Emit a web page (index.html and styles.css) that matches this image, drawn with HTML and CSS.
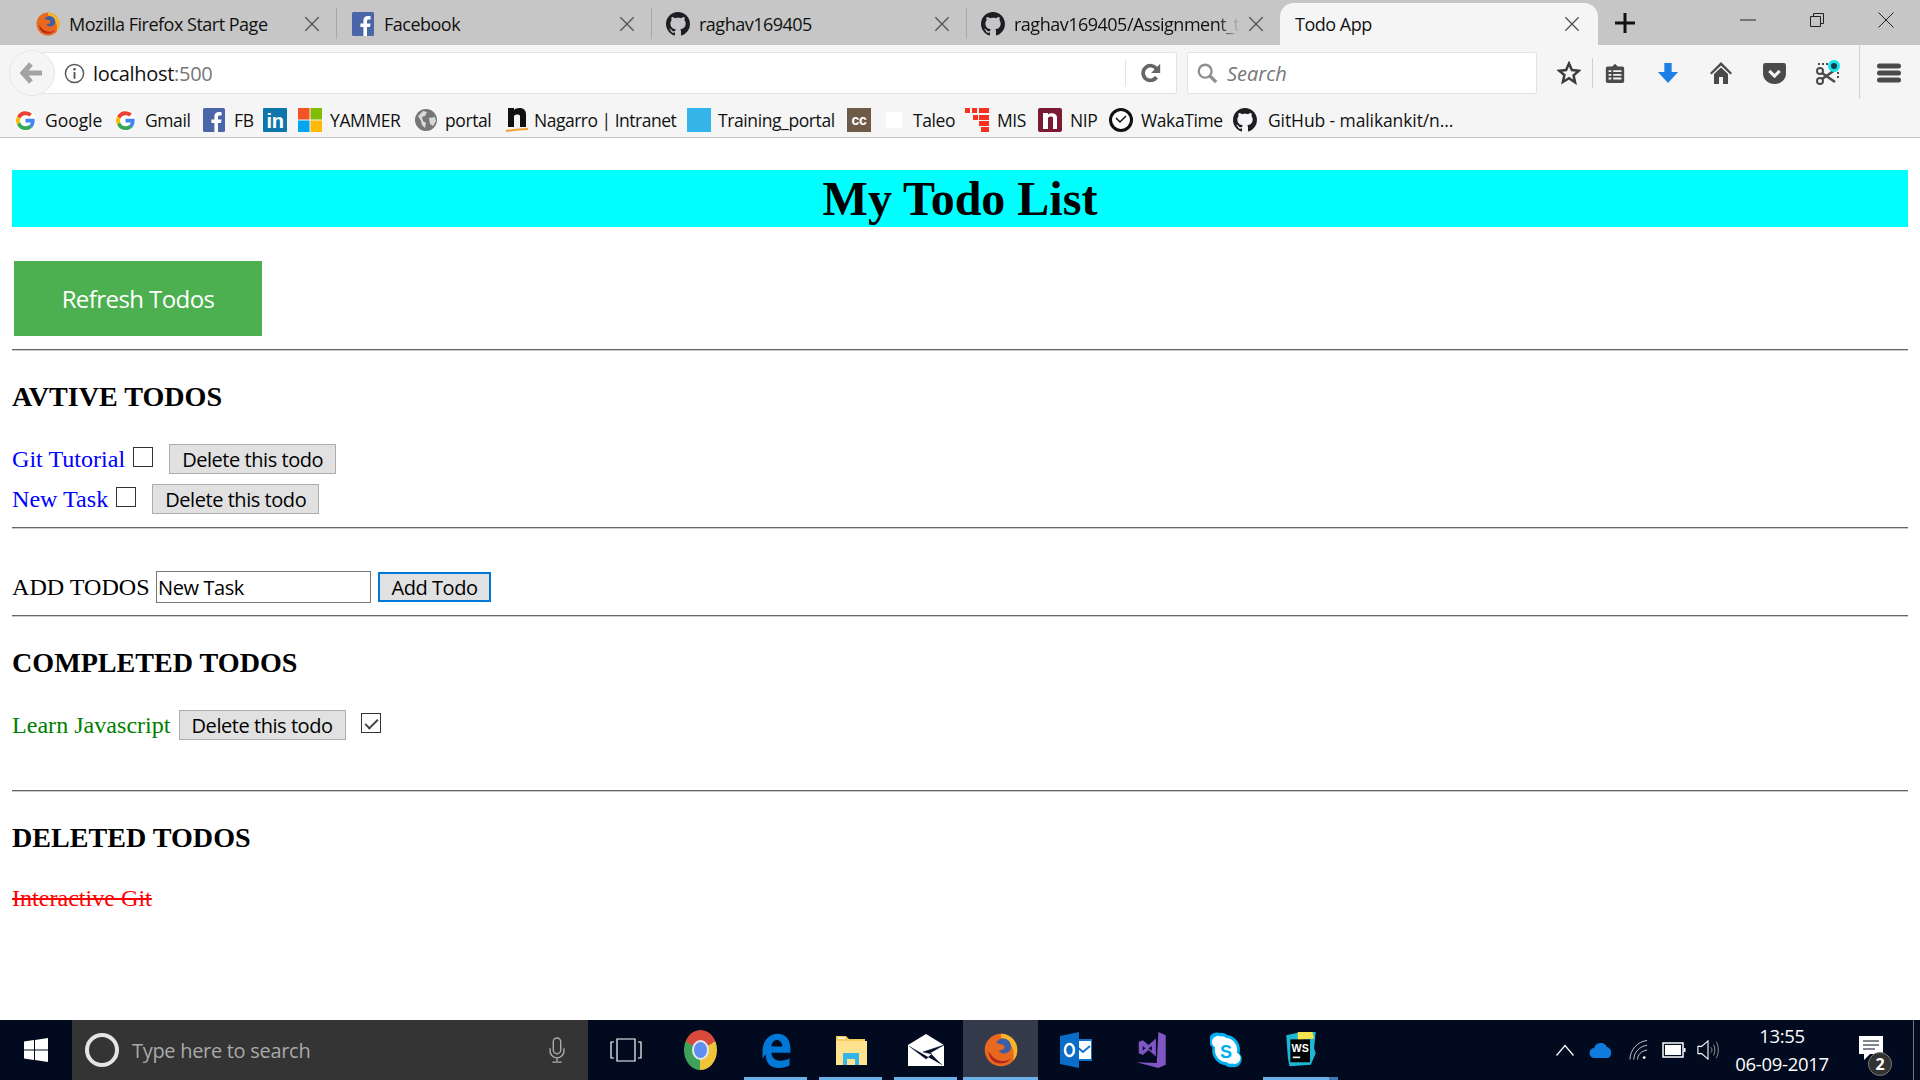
FILE: index.html
```html
<!DOCTYPE html>
<html lang="en">
<head>
<meta charset="utf-8">
<title>Todo App</title>
<link rel="stylesheet" href="styles.css">
</head>
<body>
<svg class="sprite" width="0" height="0" aria-hidden="true">
  <symbol id="gh" viewBox="0 0 16 16"><path fill="#1b1f23" fill-rule="evenodd" d="M8 0C3.58 0 0 3.58 0 8c0 3.54 2.29 6.53 5.47 7.59.4.07.55-.17.55-.38 0-.19-.01-.82-.01-1.49-2.01.37-2.53-.49-2.69-.94-.09-.23-.48-.94-.82-1.13-.28-.15-.68-.52-.01-.53.63-.01 1.08.58 1.23.82.72 1.21 1.87.87 2.33.66.07-.52.28-.87.51-1.07-1.78-.2-3.64-.89-3.64-3.95 0-.87.31-1.59.82-2.15-.08-.2-.36-1.02.08-2.12 0 0 .67-.21 2.2.82.64-.18 1.32-.27 2-.27.68 0 1.36.09 2 .27 1.53-1.04 2.2-.82 2.2-.82.44 1.1.16 1.92.08 2.12.51.56.82 1.27.82 2.15 0 3.07-1.87 3.75-3.65 3.95.29.25.54.73.54 1.48 0 1.07-.01 1.93-.01 2.2 0 .21.15.46.55.38A8.013 8.013 0 0016 8c0-4.42-3.58-8-8-8z"/></symbol>
  <symbol id="fb" viewBox="0 0 22 24"><rect width="22" height="24" rx="1.5" fill="#4a66a8"/><path fill="#fff" d="M15 24v-9h3l.5-3.6H15V9.2c0-1 .4-1.7 1.8-1.7h1.8V4.2c-.4 0-1.4-.2-2.7-.2-2.7 0-4.5 1.6-4.5 4.6v2.8H8.4V15h3v9z"/></symbol>
  <symbol id="goog" viewBox="3.2 3.2 17.6 17.6"><circle cx="12" cy="12" r="8.800" fill="#fff"/><path fill="#ea4335" d="M12 7.500c1.200 0 2.300.4 3.100 1.200l2.300-2.300A8 8 0 0 0 4.900 8.400l2.700 2.100A4.800 4.800 0 0 1 12 7.500z"/><path fill="#4285f4" d="M19.700 12.200c0-.6 0-1.100-.2-1.700H12v3.200h4.400c-.2 1-.8 1.900-1.600 2.500l2.600 2c1.400-1.400 2.300-3.500 2.300-6z"/><path fill="#fbbc05" d="M7.500 13.400a4.800 4.800 0 0 1 .1-2.900L4.900 8.400a8 8 0 0 0 0 7.200z"/><path fill="#34a853" d="M12 20c2.200 0 4-.7 5.400-2l-2.600-2c-.7.5-1.600.8-2.800.8-2.100 0-3.800-1.400-4.500-3.400l-2.600 2.200A8 8 0 0 0 12 20z"/></symbol>
  <symbol id="ffx" viewBox="0 0 24 24"><circle cx="12" cy="12" r="11.500" fill="#e8681f"/><path fill="#f7b52e" d="M12 .5a11.500 11.500 0 0 1 11.500 11.500c0 3-1 5.600-3 7.600 1-4 .6-8-1.500-11.200-1.700-2.700-4.200-4.400-7-5.200z"/><circle cx="13.500" cy="9.500" r="5.600" fill="#3a5fa8"/><path fill="#e8681f" d="M5 6c2-.8 4 1 5.500 1.500 2 .6 4 .5 4 2.500 0 1.500-2 2-4 2.500 1 2 4 2.500 6 1.500 2-1 3-3 3-3 0 5-4 8-8.500 8C6 21 3 17 3 12.500 3 10 3.500 8 5 6z"/><path fill="#b3261e" d="M3 13c.5 5 4 8.500 9 8.500 3 0 5.500-1.300 7-3.500-4 3-10 2-13-1.500C4.500 15 4 14 3 13z"/></symbol>
  <symbol id="tabx" viewBox="0 0 18 18"><path d="M1.500 1.500l15 15M16.500 1.500l-15 15" fill="none" stroke="#555" stroke-width="1.500"/></symbol>
</svg>

<header class="chrome">
  <div class="tabstrip">
    <div class="tab tab-first"><svg class="favicon"><use href="#ffx"/></svg><span class="tab-title">Mozilla Firefox Start Page</span><svg class="tab-x"><use href="#tabx"/></svg></div>
    <div class="tab"><svg class="favicon"><use href="#fb"/></svg><span class="tab-title">Facebook</span><svg class="tab-x"><use href="#tabx"/></svg></div>
    <div class="tab"><svg class="favicon"><use href="#gh"/></svg><span class="tab-title">raghav169405</span><svg class="tab-x"><use href="#tabx"/></svg></div>
    <div class="tab tab-fourth"><svg class="favicon"><use href="#gh"/></svg><span class="tab-title tab-fade">raghav169405/Assignment_t</span><svg class="tab-x"><use href="#tabx"/></svg></div>
    <div class="tab tab-active"><span class="tab-title">Todo App</span><svg class="tab-x"><use href="#tabx"/></svg></div>
    <svg class="newtab" viewBox="0 0 22 22"><path d="M11 1v20M1 11h20" stroke="#111" stroke-width="3"/></svg>
    <div class="winctl">
      <svg viewBox="0 0 16 16"><path d="M0 8h16" stroke="#222" stroke-width="1"/></svg>
      <svg viewBox="0 0 16 16"><path d="M1.500 4.500h10v10h-10zM4.500 4.500v-3h10v10h-3" fill="none" stroke="#222"/></svg>
      <svg viewBox="0 0 16 16"><path d="M.5.5l15 15M15.500.5l-15 15" stroke="#222" fill="none"/></svg>
    </div>
  </div>

  <div class="navbar">
    <div class="urlbar">
      <span class="back"><svg viewBox="0 0 24 24" width="24" height="24"><path d="M11 3L3 12l8 9M4 12h18" fill="none" stroke="#a3a3a3" stroke-width="5"/></svg></span>
      <svg class="info" viewBox="0 0 22 22"><circle cx="11" cy="11" r="9.500" fill="none" stroke="#555" stroke-width="1.500"/><path d="M11 9.500v7" stroke="#555" stroke-width="2"/><circle cx="11" cy="6.500" r="1.300" fill="#555"/></svg>
      <span class="url">localhost<span class="port">:500</span></span>
      <svg class="reload" viewBox="0 0 24 24"><path d="M18 16.500a8 8 0 1 1 0-9" fill="none" stroke="#666" stroke-width="4"/><path d="M22 2v10H12z" fill="#666"/></svg>
    </div>
    <div class="searchbar">
      <svg viewBox="0 0 24 24"><circle cx="10" cy="10" r="7" fill="none" stroke="#8f8f8f" stroke-width="2.500"/><path d="M15 15l7 7" stroke="#8f8f8f" stroke-width="3.500"/></svg>
      <span>Search</span>
    </div>
    <div class="toolicons">
      <svg class="ti-star" viewBox="0 0 24 24"><path d="M12 2.500l2.900 6.500 7 .7-5.300 4.700 1.500 7L12 17.300 5.900 21l1.500-7L2.100 9.700l7-.7z" fill="none" stroke="#3c3c3c" stroke-width="2.500"/></svg>
      <span class="ti-sep"></span>
      <svg class="ti-list" viewBox="0 0 24 24"><path fill="#4a4a4a" fill-rule="evenodd" d="M4 5h5l3-3 3 3h5a2 2 0 0 1 2 2v14a2 2 0 0 1-2 2H4a2 2 0 0 1-2-2V7a2 2 0 0 1 2-2zm1 4v2h3V9zm5 0v2h9V9zM5 13v2h3v-2zm5 0v2h9v-2zM5 17v2h3v-2zm5 0v2h9v-2z"/></svg>
      <svg class="ti-down" viewBox="0 0 24 24"><path fill="#1e7fe6" d="M8 1h8v10h7L12 23 1 11h7z"/></svg>
      <svg class="ti-home" viewBox="0 0 24 24"><path fill="#4a4a4a" d="M12 1l11 11-1.500 1.500L12 4.500 2.500 13.500 1 12zM5 13l7-6.500 7 6.500v10h-5v-7h-4v7H5z"/></svg>
      <svg class="ti-pocket" viewBox="0 0 24 24"><path fill="#4a4a4a" d="M3 2h18a2 2 0 0 1 2 2v8c0 6-5 10-11 10S1 18 1 12V4a2 2 0 0 1 2-2z"/><path d="M7 9.500l5 5 5-5" fill="none" stroke="#f5f5f5" stroke-width="3"/></svg>
      <svg class="ti-scissors" viewBox="0 0 26 26"><circle cx="5" cy="21" r="3" fill="none" stroke="#4a4a4a" stroke-width="2"/><circle cx="5" cy="11" r="3" fill="none" stroke="#4a4a4a" stroke-width="2"/><path d="M7 13l13 9M7 19l13-9" stroke="#4a4a4a" stroke-width="2.500"/><path d="M3 4h11M23 12v8" stroke="#4a4a4a" stroke-width="2" stroke-dasharray="2 2"/><circle cx="19" cy="6" r="6" fill="#15e3ee"/><circle cx="19" cy="6" r="3" fill="#1a3a4a"/></svg>
      <span class="ti-sep ti-sep-tall"></span>
      <svg class="ti-menu" viewBox="0 0 24 20"><path d="M2.500 3h19M2.500 10h19M2.500 17h19" stroke="#4a4a4a" stroke-width="5" stroke-linecap="round"/></svg>
    </div>
  </div>

  <nav class="bookmarks">
    <div class="bm bm-google"><svg><use href="#goog"/></svg><span>Google</span></div>
    <div class="bm bm-gmail"><svg><use href="#goog"/></svg><span>Gmail</span></div>
    <div class="bm bm-fb"><svg><use href="#fb"/></svg><span>FB</span></div>
    <div class="bm bm-in"><svg viewBox="0 0 24 24"><rect width="24" height="24" rx="1" fill="#0f76ab"/><text x="12" y="20" text-anchor="middle" class="icon-text in-text">in</text></svg></div>
    <div class="bm bm-yam"><svg viewBox="0 0 24 24"><rect width="11.500" height="11.500" fill="#f35325"/><rect x="12.500" width="11.500" height="11.500" fill="#81bc06"/><rect y="12.500" width="11.500" height="11.500" fill="#05a6f0"/><rect x="12.500" y="12.500" width="11.500" height="11.500" fill="#ffba08"/></svg><span>YAMMER</span></div>
    <div class="bm bm-portal"><svg viewBox="0 0 24 24"><circle cx="12" cy="12" r="11" fill="#767676"/><path fill="#d8d8d8" d="M4 8l5-5 4 1-2 4-3 1 1 4 3 2-1 5-3-3-1-4zM15 10l6-1 1 4-3 5-3-2z"/></svg><span>portal</span></div>
    <div class="bm bm-nag"><svg viewBox="0 0 24 24"><path fill="#111" d="M3 0h6v2c3-3 12-3 12 4v13h-6V8c0-2-5-2-6 0v11H3z"/><path d="M1 23c6-1 14-2 22-2" stroke="#f0a030" stroke-width="2" fill="none"/></svg><span>Nagarro | Intranet</span></div>
    <div class="bm bm-train"><svg viewBox="0 0 24 24"><rect width="24" height="24" fill="#33b5e9"/></svg><span>Training_portal</span></div>
    <div class="bm bm-cc"><svg viewBox="0 0 24 24"><rect width="24" height="24" fill="#6f5a48"/><text x="12" y="16.500" text-anchor="middle" class="icon-text cc-text">cc</text></svg></div>
    <div class="bm bm-taleo"><svg viewBox="0 0 16 24"><rect y="4" width="16" height="16" fill="#fff"/></svg><span>Taleo</span></div>
    <div class="bm bm-mis"><svg viewBox="0 0 24 24"><path fill="#f7311f" d="M0 0h5v5H0zM7 0h5v5H7zM14 0h5v5h-5zM19 0h5v5h-5zM8 7h5v5H8zM14 7h10v5H14zM14 13h10v5H14zM16 19h8v5h-8z"/></svg><span>MIS</span></div>
    <div class="bm bm-nip"><svg viewBox="0 0 24 24"><rect width="24" height="24" rx="2" fill="#7d1a33"/><path fill="#fff" d="M5 5h5v1.500c2-2 9-2 9 3V21h-4V10c0-2-4-2-5 0v11H5z"/></svg><span>NIP</span></div>
    <div class="bm bm-waka"><svg viewBox="0 0 24 24"><circle cx="12" cy="12" r="10.500" fill="#fff" stroke="#111" stroke-width="3"/><path d="M7 10l4 4 6-6" fill="none" stroke="#111" stroke-width="1.500"/></svg><span>WakaTime</span></div>
    <div class="bm bm-gh"><svg><use href="#gh"/></svg><span>GitHub - malikankit/n...</span></div>
  </nav>
</header>

<main class="page">
  <h1 class="title">My Todo List</h1>
  <button class="refresh">Refresh Todos</button>
  <hr class="rule">

  <h3 class="section-head head-active">AVTIVE TODOS</h3>
  <div class="todo todo-first"><span class="active">Git Tutorial</span><input class="check" type="checkbox"><button class="del">Delete this todo</button></div>
  <div class="todo todo-second"><span class="active">New Task</span><input class="check" type="checkbox"><button class="del">Delete this todo</button></div>
  <hr class="rule rule-after-active">

  <div class="add-row"><span class="add-label">ADD TODOS</span><input class="add-input" type="text" value="New Task"><button class="add-btn">Add Todo</button></div>
  <hr class="rule rule-after-add">

  <h3 class="section-head head-done">COMPLETED TODOS</h3>
  <div class="todo todo-done"><span class="done">Learn Javascript</span><button class="del">Delete this todo</button><input class="check check-done" type="checkbox" checked></div>
  <hr class="rule rule-after-done">

  <h3 class="section-head head-deleted">DELETED TODOS</h3>
  <div class="deleted">Interactive Git</div>
</main>

<footer class="taskbar">
  <div class="start"><svg viewBox="0 0 24 24"><path fill="#fff" d="M0 3.500l10-1.400V11.500H0zM11 2l13-2v11.500H11zM0 12.500h10v9.400L0 20.500zM11 12.500h13V24l-13-2z"/></svg></div>
  <div class="tsearch">
    <span class="cortana"></span>
    <span class="tsearch-text">Type here to search</span>
    <svg class="mic" viewBox="0 0 18 28"><rect x="5" y="1" width="8" height="17" rx="4" fill="none" stroke="#aaa" stroke-width="1.500"/><path d="M1.500 12v3a7.500 7.500 0 0 0 15 0v-3M9 22.500V26M4 27h10" fill="none" stroke="#aaa" stroke-width="1.500"/></svg>
  </div>
  <div class="slot"><svg class="ticon-view" viewBox="0 0 32 24"><path d="M7 1h18v22H7zM4 4H1v16h3M28 4h3v16h-3" fill="none" stroke="#fff" stroke-width="1.200"/></svg></div>
  <div class="slot"><span class="ticon-chrome"><span></span></span></div>
  <div class="slot slot-on"><svg class="ticon" viewBox="0 0 32 40"><path fill="#0078d7" d="M1 20C2 8 10 2 18 2c9 0 14 7 14 17v4H11c0 6 5 9 10 9 4 0 8-1 10-3v8c-3 2-7 3-12 3-10 0-15-7-14-15-2 1-3 3-4 5zm10-4h12c0-4-3-7-6-7-3 0-6 3-6 7z"/></svg></div>
  <div class="slot slot-on"><svg class="ticon" viewBox="0 0 32 34"><path fill="#f6cd5a" d="M1 3h10l3 3h16v4H1z"/><rect x="1" y="8" width="31" height="24" fill="#fee28d"/><path fill="#36b3e8" d="M8 32V20h16v12h-4v-6h-8v6z"/><rect x="3" y="4.500" width="7" height="1.500" fill="#fff"/></svg></div>
  <div class="slot slot-on"><svg class="ticon ticon-wide" viewBox="0 0 36 36"><path fill="#fff" d="M18 2l18 11v21H0V13z"/><path d="M1 14l17 13 6-5-9-2 21-7-14 8 12 12" fill="#000f26" stroke="#000f26" stroke-width=".5"/></svg></div>
  <div class="slot slot-on slot-current"><svg class="ticon-big"><use href="#ffx"/></svg></div>
  <div class="slot"><svg class="ticon" viewBox="0 0 32 36"><rect x="14" y="8" width="18" height="20" fill="#fff" stroke="#0f72c6" stroke-width="2"/><path d="M16 14l7 6 7-6" fill="none" stroke="#0f72c6" stroke-width="2"/><path fill="#0a6ec8" d="M0 4l19-4v36L0 32z"/><ellipse cx="9.500" cy="18" rx="4.500" ry="6" fill="none" stroke="#fff" stroke-width="2.500"/></svg></div>
  <div class="slot"><svg class="ticon" viewBox="0 0 36 44"><path fill="#7f56c2" d="M27 0l9 4v36l-9 4-27-7 25 1z"/><path fill="#7f56c2" d="M3 12l5-2 7 6 9-8v22l-9-8-7 6-5-2zm5 5v6l3-3zm11 0l-4 3 4 3z" fill-rule="evenodd"/></svg></div>
  <div class="slot"><svg class="ticon" viewBox="0 0 34 40"><path fill="#00aff0" d="M10 1a9 9 0 0 1 8 2 17 17 0 0 1 14 21 9 9 0 0 1-8 15 9 9 0 0 1-8-2A17 17 0 0 1 2 17 9 9 0 0 1 10 1z"/><path fill="#fff" d="M11 5a6 6 0 0 1 6 1.500A13.500 13.500 0 0 1 29 23a6 6 0 0 1-5 12 6 6 0 0 1-6-1.500A13.500 13.500 0 0 1 5 17 6 6 0 0 1 11 5z"/><text x="17" y="29" text-anchor="middle" class="icon-text skype-text">S</text></svg></div>
  <div class="slot slot-on slot-ws"><svg class="ticon" viewBox="0 0 36 44"><path fill="#1fb6d4" d="M0 4l18-4 18 0-2 20 2 6-6 14-26 2-2-10z"/><path fill="#f4e44e" d="M14 0h18l2 8-20 2z"/><rect x="5" y="9" width="24" height="28" fill="#000"/><text x="17" y="24" text-anchor="middle" class="icon-text ws-text">WS</text><rect x="8" y="30" width="9" height="2" fill="#fff"/></svg></div>

  <div class="tray">
    <svg class="tr-caret" viewBox="0 0 18 12"><path d="M.5 11.500L9 1.500l8.500 10" fill="none" stroke="#fff" stroke-width="1.200"/></svg>
    <svg class="tr-cloud" viewBox="0 0 24 16"><path fill="#0f7bdc" d="M6 16a5 5 0 0 1-1-10 7 7 0 0 1 13-1 6 6 0 0 1 1 11z"/></svg>
    <svg class="tr-wifi" viewBox="0 0 20 22"><path d="M1 21C1 11 9 2 19 1M5 21c0-7 6-14 14-15M9 21c0-5 4-9 10-10" fill="none" stroke="#ccc" stroke-width="1"/><circle cx="16" cy="19" r="1.500" fill="#fff"/></svg>
    <svg class="tr-batt" viewBox="0 0 24 16"><path d="M1 1h20v14H1z" fill="none" stroke="#fff" stroke-width="1.500"/><rect x="3" y="3" width="16" height="10" fill="#fff"/><rect x="22" y="6" width="1.500" height="4" fill="#fff"/></svg>
    <svg class="tr-vol" viewBox="0 0 24 24"><path d="M1 8h4l7-6v20l-7-6H1z" fill="none" stroke="#fff" stroke-width="1.200"/><path d="M15 9a4 4 0 0 1 0 6M18 6c2 3 2 9 0 12M21 3c3 5 3 13 0 18" fill="none" stroke="#999" stroke-width="1"/></svg>
    <div class="clock"><span>13:55</span><span>06-09-2017</span></div>
    <div class="notif">
      <svg viewBox="0 0 24 28"><path fill="#fff" d="M0 0h24v18H11l-6 6v-6H0z"/><path d="M4 5h16M4 9h16M4 13h12" stroke="#000f26" stroke-width="1"/></svg>
      <span class="badge">2</span>
    </div>
  </div>
  <span class="edge"></span>
</footer>
</body>
</html>
```

FILE: styles.css
```css
* { box-sizing: border-box; }
html, body { margin: 0; height: 100%; }
body {
  width: 1920px;
  height: 1080px;
  overflow: hidden;
  display: flex;
  flex-direction: column;
  background: #fff;
  font-family: "Liberation Serif", serif;
}
.sprite { position: absolute; }

/* browser chrome */
.chrome { height: 138px; flex: none; background: #f5f5f5; border-bottom: 1px solid #c4c4c4; font-family: "Open Sans", sans-serif; color: #111; }
.tabstrip { height: 45px; background: #c6c6c6; display: flex; align-items: stretch; }
.tab { width: 315px; flex: none; position: relative; display: flex; align-items: center; padding: 2px 0 0 15px; font-size: 18px; }
.tab::before { content: ""; position: absolute; left: 0; top: 8px; bottom: 6px; width: 1px; background: #a8a8a8; }
.tab-first { width: 336px; padding-left: 36px; }
.tab-first::before { display: none; }
.tab-fourth { width: 314px; }
.favicon { width: 24px; height: 24px; flex: none; margin-right: 9px; }
.tab-title { flex: 1; min-width: 0; white-space: nowrap; overflow: hidden; letter-spacing: -.5px; }
.tab-fade { -webkit-mask-image: linear-gradient(to right, #000 90%, transparent 100%); mask-image: linear-gradient(to right, #000 90%, transparent 100%); margin-right: 8px; }
.tab-x { flex: none; width: 16px; height: 16px; margin-right: 16px; }
.tab-active { width: 318px; margin-top: 3px; background: #f5f5f5; border-radius: 14px 14px 0 0; padding: 0 0 0 15px; }
.tab-active::before { display: none; }
.tab-active .tab-x { margin-right: 18px; }
.newtab { width: 22px; height: 22px; align-self: center; margin-left: 16px; }
.winctl { margin-left: auto; display: flex; gap: 53px; padding: 0 26px 0 0; align-items: center; margin-top: -5px; }
.winctl svg { width: 16px; height: 16px; }

.navbar { height: 51px; display: flex; align-items: center; padding: 5px 0 0 40px; }
.urlbar { width: 1137px; height: 42px; background: #fff; border: 1px solid #e4e4e4; border-radius: 2px; display: flex; align-items: center; position: relative; padding-left: 24px; }
.back { position: absolute; left: -32px; top: -3px; width: 46px; height: 46px; border-radius: 50%; background: #f5f5f5; border: 1px solid #e6e6e6; display: flex; align-items: center; justify-content: center; }
.info { width: 21px; height: 21px; margin-left: -1px; margin-right: 8px; }
.url { font-size: 20px; color: #111; letter-spacing: -.3px; }
.port { color: #777; }
.reload { width: 22px; height: 22px; position: absolute; right: 14px; top: 9px; }
.urlbar::after { content: ""; position: absolute; right: 50px; top: 7px; bottom: 7px; width: 1px; background: #e2e2e2; }
.searchbar { width: 350px; height: 42px; margin-left: 10px; background: #fff; border: 1px solid #e4e4e4; border-radius: 2px; display: flex; align-items: center; padding-left: 8px; font-size: 20px; font-style: italic; color: #777; gap: 9px; }
.searchbar svg { width: 22px; height: 22px; }
.toolicons { display: flex; align-items: center; height: 46px; margin-left: 20px; position: relative; }
.toolicons svg { flex: none; }
.ti-star { width: 24px; height: 24px; }
.ti-sep { width: 1px; height: 30px; background: #d0d0d0; margin-left: 11px; }
.ti-list { width: 22px; height: 24px; margin-left: 11px; }
.ti-down { width: 22px; height: 24px; margin-left: 31px; }
.ti-home { width: 24px; height: 24px; margin-left: 30px; }
.ti-pocket { width: 25px; height: 25px; margin-left: 29px; }
.ti-scissors { width: 26px; height: 26px; margin-left: 28px; }
.ti-sep-tall { height: 55px; margin-left: 18px; margin-top: -4px; }
.ti-menu { width: 24px; height: 20px; margin-left: 17px; }

.bookmarks { height: 41px; display: flex; align-items: center; padding: 7px 0 0 15px; font-size: 17.500px; white-space: nowrap; }
.bm { display: flex; align-items: center; flex: none; letter-spacing: -.4px; }
.bm svg { width: 24px; height: 24px; flex: none; }
.bm span { margin-left: 8px; }
.bm-google svg, .bm-gmail svg { width: 21px; height: 21px; }
.bm-google span, .bm-gmail span { margin-left: 9px; }
.bm-google { width: 100px; letter-spacing: -.05px; }
.bm-gmail { width: 87px; }
.bm-fb { width: 61px; }
.bm-in { width: 35px; }
.bm-yam { width: 116px; }
.bm-portal { width: 91px; }
.bm-portal span { margin-left: 7px; }
.bm-nag { width: 182px; letter-spacing: -.5px; }
.bm-nag span { margin-left: 5px; }
.bm-train { width: 160px; }
.bm-train span { margin-left: 7px; }
.bm-cc { width: 39px; }
.bm-taleo { width: 79px; }
.bm-taleo svg { width: 16px; }
.bm-taleo span { margin-left: 11px; }
.bm-mis { width: 73px; }
.bm-nip { width: 71px; }
.bm-waka { width: 124px; }
.bm-gh { letter-spacing: -.1px; }
.bm-gh span { margin-left: 11px; }
.icon-text { font-family: "Liberation Sans", sans-serif; font-weight: 700; fill: #fff; }
.in-text { font-size: 20px; }
.cc-text { font-size: 14px; }
.skype-text { font-size: 20px; fill: #00aff0; }
.ws-text { font-size: 13px; }

/* page */
.page { flex: 1; min-height: 0; padding: 0 12px; overflow: hidden; }
.title { margin: 32px 0 34px; height: 57px; line-height: 57px; background: #0ff; color: #000; text-align: center; font-size: 48px; font-weight: 700; }
.refresh { display: block; width: 248px; height: 75px; margin: 0 0 13px 2px; background: #4caf50; color: #fff; border: 0; font-family: "Open Sans", sans-serif; font-size: 24px; letter-spacing: -.58px; padding: 0; }
.rule { margin: 0; height: 2px; border: 0; border-top: 1px solid #666; border-bottom: 1px solid #ccc; }
.section-head { margin: 0; font-size: 28.100px; font-weight: 700; line-height: 32px; color: #000; }
.head-active { margin-top: 30px; }
.head-done { margin-top: 30px; }
.head-deleted { margin-top: 30px; }
.todo { display: flex; align-items: center; height: 30px; font-size: 24.100px; white-space: nowrap; }
.todo-first { margin-top: 31px; }
.todo-second { margin-top: 10px; }
.rule-after-active { margin-top: 13px; }
.active { color: #00f; }
.done { color: #008000; }
.check { appearance: none; -webkit-appearance: none; width: 20px; height: 20px; margin: 0 16px 5px 8px; border: 1px solid #333; background: #fff; position: relative; flex: none; }
.check-done { margin: 0 0 5px 15px; }
.check-done::before { content: ""; position: absolute; left: 6px; top: 2px; width: 5px; height: 11px; border: solid #444; border-width: 0 2px 2px 0; transform: rotate(45deg); }
.del { width: 167px; height: 30px; padding: 0; background: #e1e1e1; border: 1px solid #adadad; color: #000; font-family: "Open Sans", sans-serif; font-size: 20px; letter-spacing: -.45px; flex: none; }
.todo-done .del { margin-left: 8px; }
.add-row { display: flex; align-items: center; height: 32px; margin-top: 42px; font-size: 24.100px; white-space: nowrap; }
.add-label { width: 144px; color: #000; }
.add-input { width: 215px; height: 32px; border: 1px solid #767676; padding: 0 1px; font-family: "Open Sans", sans-serif; font-size: 20px; letter-spacing: -.4px; color: #000; }
.add-btn { width: 113px; height: 30px; margin-left: 7px; background: #e1e1e1; border: 2px solid #0078d7; padding: 0; color: #000; font-family: "Open Sans", sans-serif; font-size: 20px; letter-spacing: -.45px; }
.rule-after-add { margin-top: 12px; }
.todo-done { margin-top: 31px; }
.rule-after-done { margin-top: 50px; }
.deleted { margin-top: 31px; font-size: 24.100px; color: #f00; text-decoration: line-through; }

/* taskbar */
.taskbar { height: 60px; flex: none; background: #010a1e; display: flex; align-items: center; position: relative; font-family: "Open Sans", sans-serif; color: #fff; }
.start { width: 72px; display: flex; justify-content: center; }
.start svg { width: 24px; height: 24px; }
.tsearch { width: 516px; height: 60px; background: #343434; display: flex; align-items: center; padding-left: 13px; }
.cortana { width: 34px; height: 34px; border-radius: 50%; border: 4px solid #e4e4e4; flex: none; }
.tsearch-text { margin-left: 13px; font-size: 20px; color: #a9a9a9; flex: 1; letter-spacing: -.3px; }
.mic { width: 18px; height: 26px; margin-right: 22px; }
.slot { width: 75px; height: 60px; flex: none; display: flex; align-items: center; justify-content: center; position: relative; }
.slot-on::after { content: ""; position: absolute; left: 6px; right: 6px; bottom: 0; height: 3px; background: #6cb0e8; }
.slot-current { background: #333a4a; }
.slot-current::after { left: 0; right: 0; }
.slot-ws::after { left: 0; right: 0; background: linear-gradient(to right, #6cb0e8 88%, #3f78b0 88%); }
.ticon { width: 32px; height: 36px; }
.ticon-wide { width: 36px; height: 36px; }
.ticon-big { width: 34px; height: 34px; }
.ticon-view { width: 32px; height: 24px; }
.ticon-chrome { width: 33px; height: 40px; border-radius: 50%; display: flex; align-items: center; justify-content: center; background: conic-gradient(from 60deg, #f0c43a 0 120deg, #3da35a 120deg 240deg, #d94a3c 240deg 360deg); }
.ticon-chrome span { width: 17px; height: 20px; border-radius: 50%; background: #5c8ff0; border: 2px solid #e8e8e8; }
.tray { margin-left: auto; display: flex; align-items: center; height: 60px; margin-right: 17px; }
.tray svg { flex: none; }
.tr-caret { width: 18px; height: 12px; }
.tr-cloud { width: 24px; height: 16px; margin-left: 15px; }
.tr-wifi { width: 19px; height: 22px; margin-left: 16px; }
.tr-batt { width: 24px; height: 16px; margin-left: 14px; }
.tr-vol { width: 22px; height: 24px; margin-left: 11px; }
.clock { width: 100px; margin-left: 13px; display: flex; flex-direction: column; align-items: center; font-size: 18.500px; line-height: 28px; letter-spacing: -.3px; }
.notif { width: 60px; height: 60px; margin-left: 11px; position: relative; display: flex; align-items: center; justify-content: center; }
.notif svg { width: 24px; height: 28px; margin-left: -5px; }
.badge { position: absolute; right: 11px; bottom: 4px; width: 24px; height: 24px; border-radius: 50%; background: #333; border: 1px solid #777; font-size: 16px; font-weight: 700; display: flex; align-items: center; justify-content: center; }
.edge { position: absolute; right: 6px; top: 0; bottom: 0; width: 1px; background: #777; }
```
